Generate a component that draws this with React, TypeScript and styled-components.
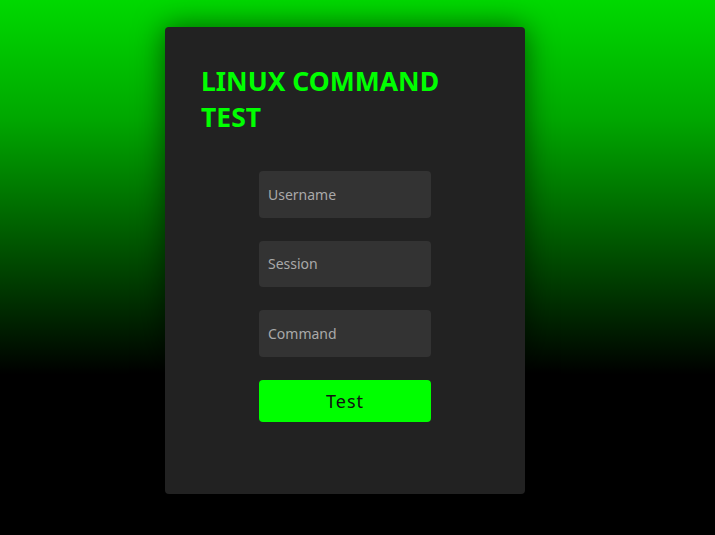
import React, { useState } from 'react';
import styled, { createGlobalStyle } from 'styled-components';

const GlobalStyle = createGlobalStyle`
  html, body {
    margin: 0;
    padding: 0;
    height: 100%;
  }
  body {
    font-family: "Noto Sans", "Liberation Sans", sans-serif;
    background: linear-gradient(to bottom, #00d900 0%, #00a800 22%, #004d00 48%, #000000 70%, #000000 100%);
    background-attachment: fixed;
    min-height: 535px;
  }
`;

const Page = styled.div`
  min-height: 535px;
  box-sizing: border-box;
  padding: 27px 0 0 165px;
`;

const Card = styled.div`
  width: 360px;
  height: 467px;
  box-sizing: border-box;
  background-color: #222222;
  border-radius: 4px;
  box-shadow: 0 0 30px rgba(0, 0, 0, 0.55);
  padding: 36px 36px;
  display: flex;
  flex-direction: column;
`;

const Title = styled.h1`
  margin: 0 0 36px 0;
  color: #00ff00;
  font-size: 26.5px;
  line-height: 36px;
  font-weight: 700;
  letter-spacing: 0;
  width: 260px;
`;

const Form = styled.form`
  display: flex;
  flex-direction: column;
  align-items: center;
  gap: 23px;
`;

const Input = styled.input`
  width: 172px;
  height: 46.5px;
  box-sizing: border-box;
  padding: 0 9px;
  border: none;
  border-radius: 4px;
  background-color: #333333;
  color: #dddddd;
  font-family: inherit;
  font-size: 14px;

  &::placeholder {
    color: #a9a9a9;
  }

  &:focus {
    outline: none;
  }
`;

const Button = styled.button`
  width: 172px;
  height: 42px;
  border: none;
  border-radius: 4px;
  background-color: #00ff00;
  color: #111111;
  font-family: inherit;
  font-size: 18px;
  letter-spacing: 1px;
  cursor: pointer;
`;

const App: React.FC = () => {
  const [username, setUsername] = useState('');
  const [session, setSession] = useState('');
  const [command, setCommand] = useState('');

  const handleSubmit = (e: React.FormEvent) => {
    e.preventDefault();
  };

  return (
    <>
      <GlobalStyle />
      <Page>
        <Card>
          <Title>LINUX COMMAND TEST</Title>
          <Form onSubmit={handleSubmit}>
            <Input
              type="text"
              placeholder="Username"
              value={username}
              onChange={(e) => setUsername(e.target.value)}
            />
            <Input
              type="text"
              placeholder="Session"
              value={session}
              onChange={(e) => setSession(e.target.value)}
            />
            <Input
              type="text"
              placeholder="Command"
              value={command}
              onChange={(e) => setCommand(e.target.value)}
            />
            <Button type="submit">Test</Button>
          </Form>
        </Card>
      </Page>
    </>
  );
};

export default App;
